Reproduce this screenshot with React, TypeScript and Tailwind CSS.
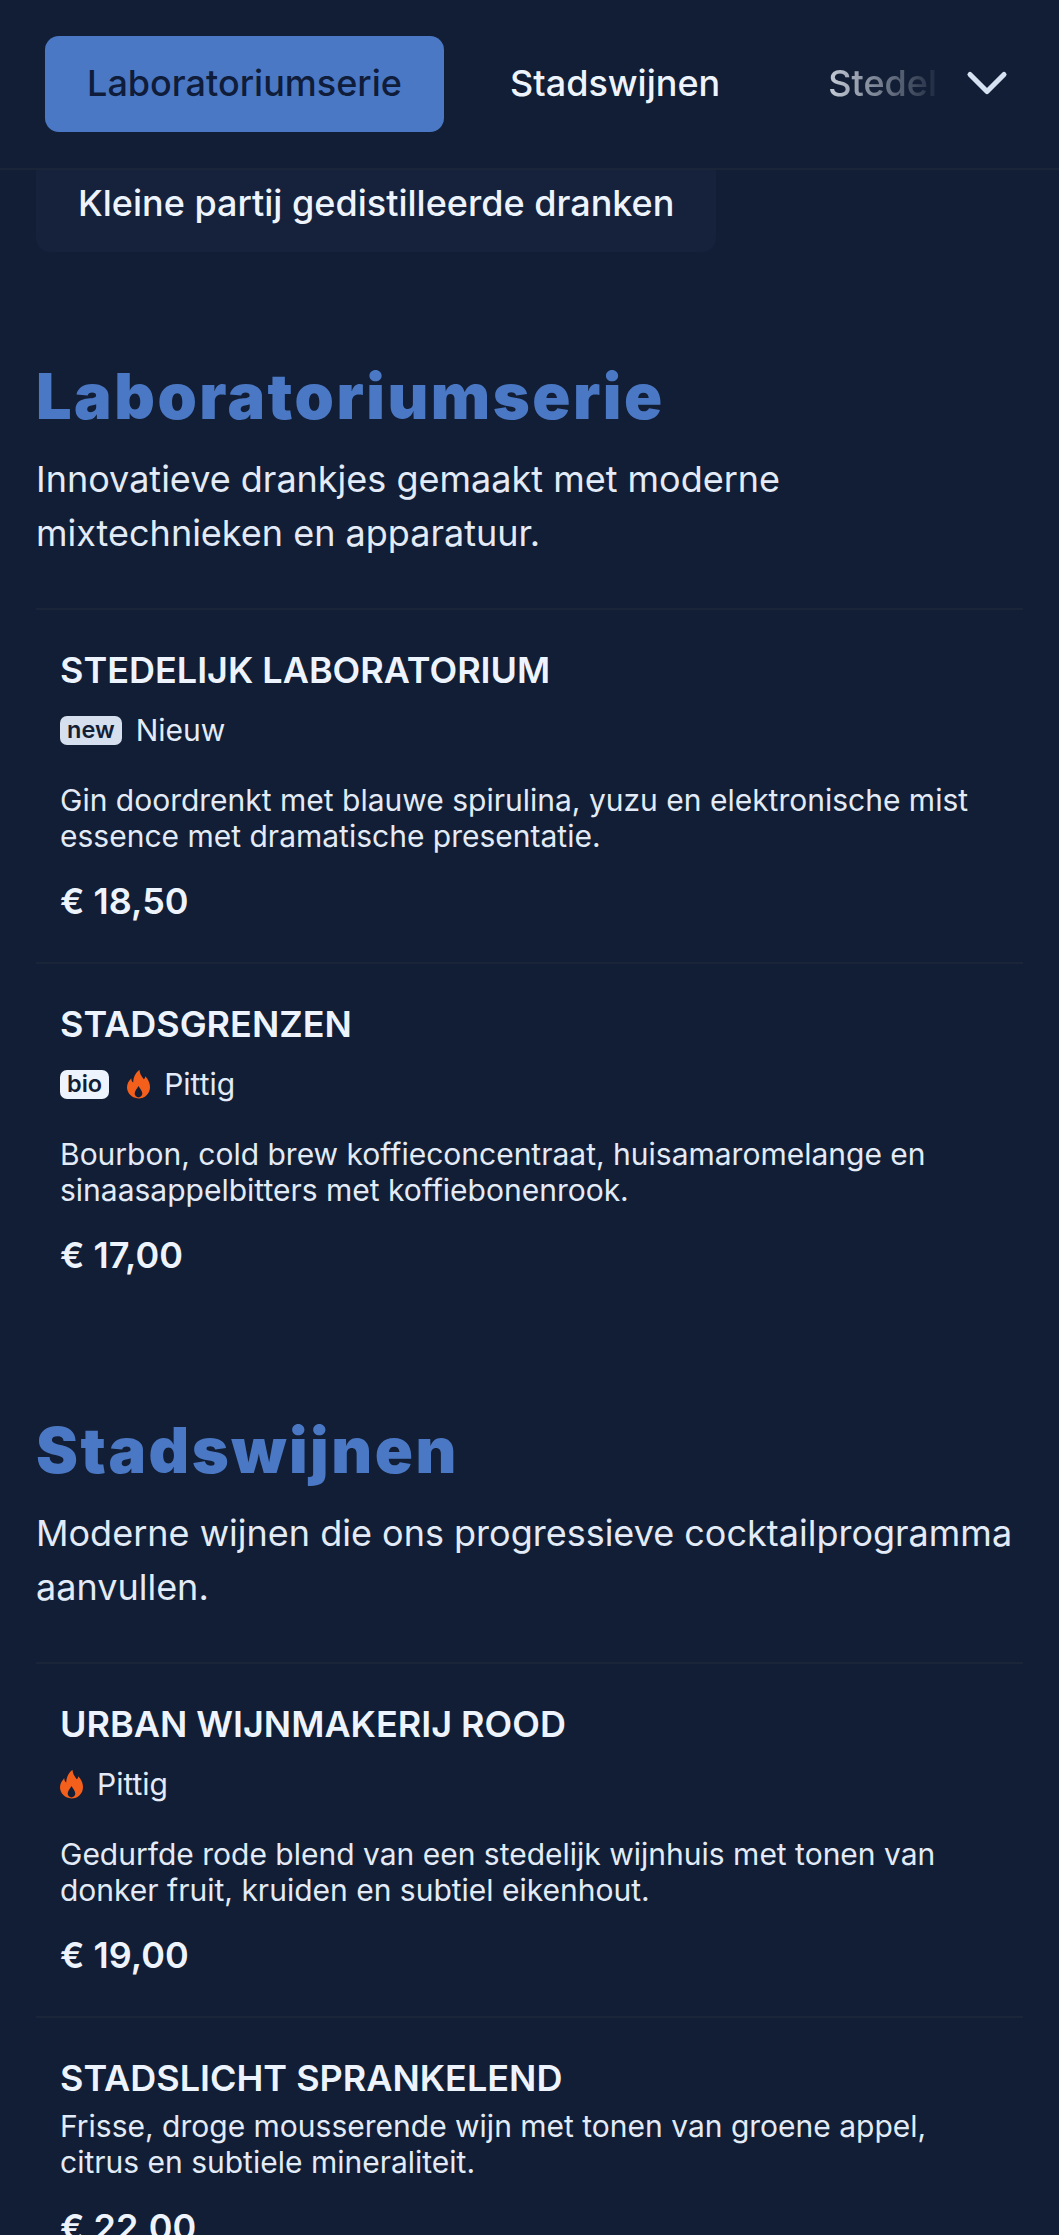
import { ChevronDown } from "lucide-react";

type Item = {
  name: string;
  tag?: string;
  tagCls?: string;
  spicy?: boolean;
  label?: string;
  desc: string[];
  price: string;
};

const lab: Item[] = [
  {
    name: "STEDELIJK LABORATORIUM",
    tag: "new",
    tagCls: "bg-[#d5dfee]",
    label: "Nieuw",
    desc: ["Gin doordrenkt met blauwe spirulina, yuzu en elektronische mist", "essence met dramatische presentatie."],
    price: "€ 18,50",
  },
  {
    name: "STADSGRENZEN",
    tag: "bio",
    tagCls: "bg-[#eef4fd]",
    spicy: true,
    label: "Pittig",
    desc: ["Bourbon, cold brew koffieconcentraat, huisamaromelange en", "sinaasappelbitters met koffiebonenrook."],
    price: "€ 17,00",
  },
];

const wine: Item[] = [
  {
    name: "URBAN WIJNMAKERIJ ROOD",
    spicy: true,
    label: "Pittig",
    desc: ["Gedurfde rode blend van een stedelijk wijnhuis met tonen van", "donker fruit, kruiden en subtiel eikenhout."],
    price: "€ 19,00",
  },
  {
    name: "STADSLICHT SPRANKELEND",
    desc: ["Frisse, droge mousserende wijn met tonen van groene appel,", "citrus en subtiele mineraliteit."],
    price: "€ 22,00",
  },
];

function Flame({ className }: { className?: string }) {
  return (
    <svg viewBox="0 0 24 30" className={className} fill="currentColor" fillRule="evenodd">
      <path d="M13 0C13.5 5 15.5 7 17.5 10C18.5 9.5 19 8.5 19 7C22 10 24 14 24 18C24 25 18.5 30 12 30C5.5 30 0 25 0 18.5C0 14.5 2 11.5 4.5 9C4.5 11 5 12.5 6.5 13.5C6.5 8 9 3 13 0ZM12 17C10.5 20 8 22 8 25C8 27.5 10 29 12 29C14 29 16 27.5 16 25C16 22 13.5 20 12 17Z" />
    </svg>
  );
}

function MenuItem({ item }: { item: Item }) {
  return (
    <div className="border-t-2 border-[#1a2539] px-[24px] pt-[33px] pb-[34px]">
      <h3 className="text-[36px] leading-[54px] font-semibold text-[#eef4fd]">{item.name}</h3>
      {item.label && (
        <div className="flex items-center gap-[14px] h-[54px] mt-[6px] text-[30px] text-[#e2ebf7]">
          {item.tag && (
            <span className={`${item.tagCls} rounded-[7px] h-[29px] px-[7px] flex items-center text-[23.5px] font-semibold text-[#121e35]`}>
              {item.tag}
            </span>
          )}
          {item.spicy && <Flame className={`text-[#f4601c] w-[23px] h-[30px] ${item.tag ? "ml-[4px]" : ""}`} />}
          <span>{item.label}</span>
        </div>
      )}
      <p className={`text-[30px] leading-[36px] text-[#e2ebf7] ${item.label ? "mt-[25px]" : "mt-[3px]"}`}>
        {item.desc.map((l) => (
          <span key={l} className="block whitespace-nowrap">{l}</span>
        ))}
      </p>
      <p className="text-[36px] leading-[54px] font-semibold text-[#eef4fd] mt-[20px]">{item.price}</p>
    </div>
  );
}

function Section({ title, desc, items, top }: { title: string; desc: string[]; items: Item[]; top: string }) {
  return (
    <section className={top}>
      <h2 className="text-[63px] leading-[90px] font-black tracking-[2.5px] text-[#4a78c4]">{title}</h2>
      <p className="text-[36px] leading-[54px] text-[#e2ebf7] mt-[11px] mb-[48px]">
        {desc.map((l) => (
          <span key={l} className="block whitespace-nowrap">{l}</span>
        ))}
      </p>
      <div className="w-[987px]">
        {items.map((i) => (
          <MenuItem key={i.name} item={i} />
        ))}
      </div>
    </section>
  );
}

export default function App() {
  return (
    <div className="w-[1059px] h-[2235px] overflow-hidden bg-[#121e35] font-['Inter',sans-serif]">
      <header className="relative h-[170px] border-b-2 border-[#1a2539] flex items-center pl-[45px] text-[36px] font-medium whitespace-nowrap overflow-hidden">
        <div className="w-[399px] h-[96px] pb-[2px] rounded-[14px] bg-[#4a78c4] text-[#0f1c3a] flex items-center justify-center shrink-0">
          Laboratoriumserie
        </div>
        <div className="ml-[66px] mb-[2px] text-[#eef4fd] shrink-0">Stadswijnen</div>
        <div className="ml-[108px] mb-[2px] w-[108px] overflow-hidden shrink-0 text-[#eef4fd] [mask-image:linear-gradient(to_right,#ffffffd0,#ffffff10)]">Stedelijk</div>
        <ChevronDown className="absolute left-[953px] top-[49px] w-[68px] h-[68px] text-[#d6e2f2]" strokeWidth={1.8} />
      </header>
      <main className="pl-[36px]">
        <div className="w-[680px] h-[82px] rounded-b-[14px] bg-[#16223c] pl-[42px] pt-[3px] text-[36px] leading-[60px] font-medium text-[#eef4fd]">
          Kleine partij gedistilleerde dranken
        </div>
        <Section
          top="mt-[99px]"
          title="Laboratoriumserie"
          desc={["Innovatieve drankjes gemaakt met moderne", "mixtechnieken en apparatuur."]}
          items={lab}
        />
        <Section
          top="mt-[89px]"
          title="Stadswijnen"
          desc={["Moderne wijnen die ons progressieve cocktailprogramma", "aanvullen."]}
          items={wine}
        />
      </main>
    </div>
  );
}
